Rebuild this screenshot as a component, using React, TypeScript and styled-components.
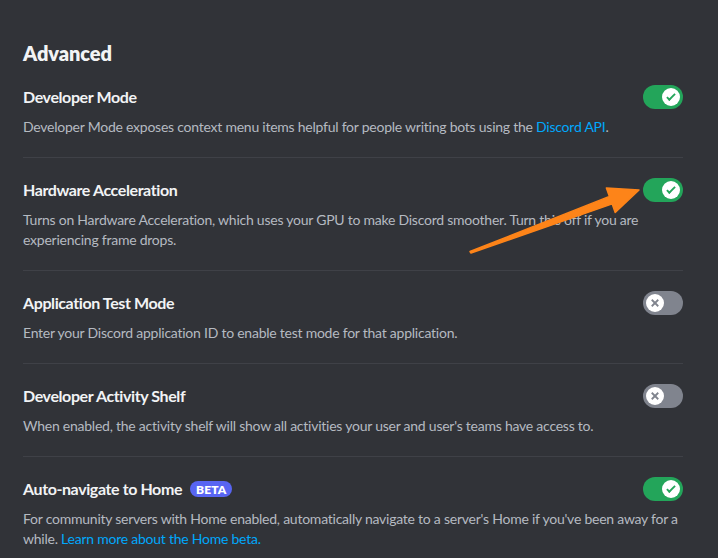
import React from "react";
import styled, { createGlobalStyle } from "styled-components";

const Global = createGlobalStyle`
  html, body { margin: 0; padding: 0; background: #313338; }
  body { font-family: Lato, "Noto Sans", sans-serif; -webkit-font-smoothing: antialiased; }
`;

const Page = styled.div`
  position: relative;
  width: 718px;
  height: 558px;
  overflow: hidden;
  box-sizing: border-box;
  padding: 41px 35px 0 23px;
  background: #313338;
`;

const Heading = styled.h2`
  margin: 0 0 20px;
  font-size: 20px;
  line-height: 24px;
  font-weight: 800;
  letter-spacing: -0.1px;
  color: #f2f3f5;
`;

const Row = styled.div<{ $last?: boolean }>`
  padding-bottom: ${(p) => (p.$last ? 0 : 20)}px;
  margin-bottom: 20px;
  border-bottom: ${(p) => (p.$last ? "none" : "1px solid #3f4147")};
`;

const TitleLine = styled.div`
  display: flex;
  align-items: center;
  justify-content: space-between;
  height: 24px;
`;

const TitleWrap = styled.div`
  display: flex;
  align-items: center;
`;

const Title = styled.div`
  font-size: 16px;
  line-height: 24px;
  font-weight: 700;
  letter-spacing: -0.4px;
  color: #f2f3f5;
`;

const Badge = styled.span`
  display: inline-flex;
  align-items: center;
  height: 16px;
  margin-left: 8px;
  padding: 0 6px;
  border-radius: 8px;
  background: #5865f2;
  color: #fff;
  font-size: 12px;
  font-weight: 800;
  letter-spacing: 0.1px;
`;

const Desc = styled.div`
  margin-top: 8px;
  font-size: 14px;
  line-height: 20px;
  letter-spacing: -0.24px;
  color: #b5bac1;
`;

const Link = styled.a`
  color: #00a8fc;
  text-decoration: none;
`;

const Track = styled.div<{ $on: boolean }>`
  position: relative;
  flex: none;
  width: 40px;
  height: 24px;
  border-radius: 12px;
  background: ${(p) => (p.$on ? "#23a55a" : "#80848e")};
`;

const Knob = styled.div<{ $on: boolean }>`
  position: absolute;
  top: 3px;
  left: ${(p) => (p.$on ? 19 : 3)}px;
  width: 18px;
  height: 18px;
  border-radius: 50%;
  background: #fff;
  display: flex;
  align-items: center;
  justify-content: center;
`;

const Arrow = styled.svg`
  position: absolute;
  left: 0;
  top: 0;
  pointer-events: none;
`;

function Toggle({ on }: { on: boolean }) {
  return (
    <Track $on={on}>
      <Knob $on={on}>
        {on ? (
          <svg width="16" height="16" viewBox="0 0 20 20">
            <path fill="#23a55a" d="M7.89561 14.8538L6.30462 13.2629L14.3099 5.25755L15.9009 6.84854L7.89561 14.8538Z" />
            <path fill="#23a55a" d="M4.08643 11.0903L5.67742 9.49929L9.4485 13.2704L7.85751 14.8614L4.08643 11.0903Z" />
          </svg>
        ) : (
          <svg width="16" height="16" viewBox="0 0 20 20">
            <path fill="#80848e" d="M5.13231 6.72963L6.7233 5.13864L14.855 13.2704L13.264 14.8614L5.13231 6.72963Z" />
            <path fill="#80848e" d="M13.2704 5.13864L14.8614 6.72963L6.72963 14.8614L5.13864 13.2704L13.2704 5.13864Z" />
          </svg>
        )}
      </Knob>
    </Track>
  );
}

export default function App() {
  return (
    <Page>
      <Global />
      <Heading>Advanced</Heading>
      <Row>
        <TitleLine>
          <Title>Developer Mode</Title>
          <Toggle on />
        </TitleLine>
        <Desc>
          Developer Mode exposes context menu items helpful for people writing bots using the{" "}
          <Link>Discord API</Link>.
        </Desc>
      </Row>
      <Row>
        <TitleLine>
          <Title>Hardware Acceleration</Title>
          <Toggle on />
        </TitleLine>
        <Desc>
          Turns on Hardware Acceleration, which uses your GPU to make Discord smoother. Turn this off if you are
          experiencing frame drops.
        </Desc>
      </Row>
      <Row>
        <TitleLine>
          <Title>Application Test Mode</Title>
          <Toggle on={false} />
        </TitleLine>
        <Desc>Enter your Discord application ID to enable test mode for that application.</Desc>
      </Row>
      <Row>
        <TitleLine>
          <Title>Developer Activity Shelf</Title>
          <Toggle on={false} />
        </TitleLine>
        <Desc>When enabled, the activity shelf will show all activities your user and user's teams have access to.</Desc>
      </Row>
      <Row $last>
        <TitleLine>
          <TitleWrap>
            <Title>Auto-navigate to Home</Title>
            <Badge>BETA</Badge>
          </TitleWrap>
          <Toggle on />
        </TitleLine>
        <Desc>
          For community servers with Home enabled, automatically navigate to a server's Home if you've been away for a
          while. <Link>Learn more about the Home beta.</Link>
        </Desc>
      </Row>
      <Arrow width="718" height="558" viewBox="0 0 718 558">
        <polygon
          fill="#fd8419"
          strokeLinejoin="round"
          stroke="#fd8419"
          strokeWidth="1.5"
          points="470,251.5 609.4,196.4 606.4,188 639,190 615.2,212.4 612.2,203.9 471,253"
        />
      </Arrow>
    </Page>
  );
}
